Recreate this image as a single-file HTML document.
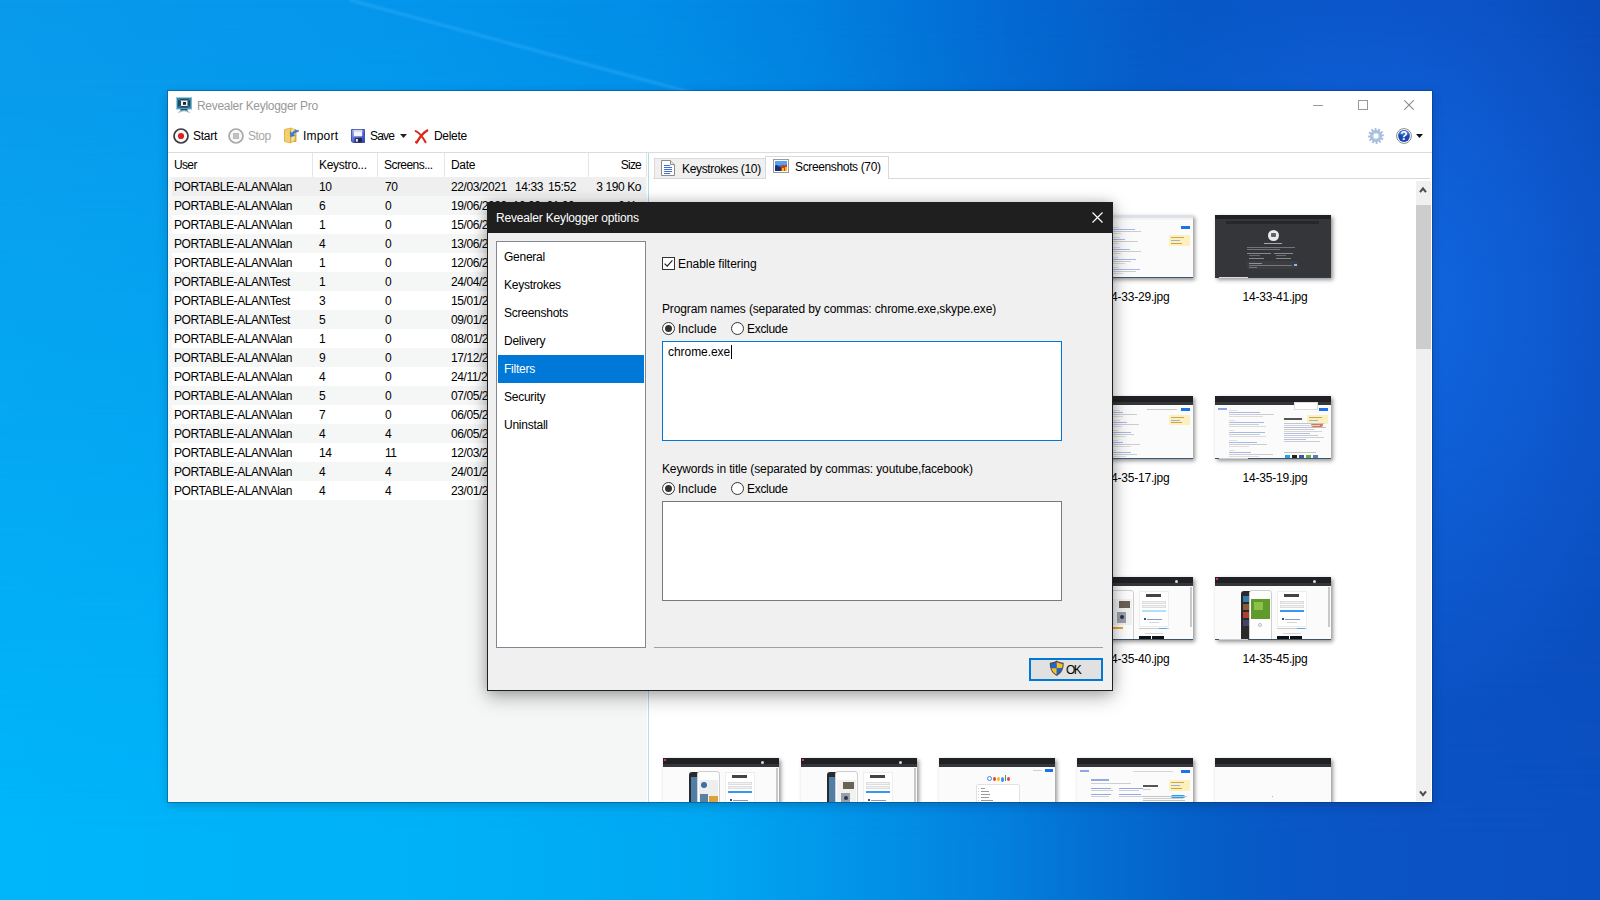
<!DOCTYPE html>
<html>
<head>
<meta charset="utf-8">
<title>Revealer Keylogger Pro</title>
<style>
*{box-sizing:border-box;margin:0;padding:0}
html,body{width:1600px;height:900px;overflow:hidden}
body{position:relative;font-family:"Liberation Sans",sans-serif;font-size:12px;color:#000;
 background:linear-gradient(to right,#0a9aeb 0%,#0496ec 25%,#028ee8 40%,#0282e1 50%,#046ad3 62.5%,#0857c6 75%,#0a4ec0 87.5%,#0a4aba 100%);
}
.abs{position:absolute}
.t{position:absolute;white-space:pre;line-height:14px;height:14px}
#wall1{left:0;top:0;width:1600px;height:900px;background:linear-gradient(to right,#00b6fa 0%,#00b2f7 25%,#00a8f2 43.75%,#028ee5 56.25%,#0380de 62.5%,#046ed2 68.75%,#055fc8 75%,#0956c6 81.25%,#0b52c4 90.6%,#0b50c2 100%);-webkit-mask-image:linear-gradient(to bottom,rgba(0,0,0,0) 0%,rgba(0,0,0,1) 93%);mask-image:linear-gradient(to bottom,rgba(0,0,0,0) 0%,rgba(0,0,0,1) 93%)}
#wall2{left:0;top:0;width:1600px;height:900px;background:radial-gradient(ellipse 300px 430px at 1400px 300px,rgba(22,118,245,.62),rgba(22,118,245,0) 100%)}
#wall3{left:0;top:0;width:1600px;height:900px}
/* main window */
#win{left:168px;top:91px;width:1264px;height:711px;overflow:hidden;background:#fff;box-shadow:0 0 0 1px rgba(0,50,100,.38),0 3px 10px rgba(0,20,50,.22)}
#listpane{left:0;top:86px;width:479px;height:625px;background:#f5f6f6}
#lhead{left:0;top:62px;width:479px;height:24px;background:#fff}
.hsep{position:absolute;top:62px;width:1px;height:24px;background:#e5e5e5}
.row{position:absolute;left:4px;width:474px;height:19px}
.row.w{background:#fff}
.row.sel{background:#efefef}
.row span{position:absolute;top:3px;line-height:14px;white-space:pre;letter-spacing:-0.42px}
.c1{left:2px}.c2{left:147px}.c3{left:213px}.c4{left:279px}.c5{right:5px}

/* right pane */
#split{left:480px;top:62px;width:1px;height:649px;background:#b5dcf3}
.tab{position:absolute;border:1px solid #d9d9d9;border-bottom:none}
.th{position:absolute;width:116px;height:63px;background:#fbfbfb;box-shadow:2px 2px 4px rgba(0,0,0,.42);overflow:hidden}
.tc{position:absolute;left:0;top:0;width:116px;height:63px;filter:blur(.5px)}
.th i{position:absolute;display:block}
.th .bar{left:0;top:0;width:116px;height:9px;background:#202124}
.th .bar2{left:0;top:6px;width:116px;height:3px;background:#35363a}
.lbl{position:absolute;width:136px;text-align:center;line-height:14px;white-space:pre;letter-spacing:-0.2px}
/* dialog */
#dlg{left:487px;top:202px;width:626px;height:489px;background:#f0f0f0;border:1px solid #1f1f1f;box-shadow:0 6px 18px rgba(0,0,0,.30),0 0 10px rgba(0,0,0,.16)}
#dtitle{left:0;top:0;width:624px;height:30px;background:#1f1f1f}

#nav{left:8px;top:38px;width:150px;height:407px;background:#fff;border:1px solid #828790}
.ni{position:absolute;left:1px;width:146px;height:28px;line-height:14px;padding:7px 0 0 6px;white-space:pre;letter-spacing:-0.25px;font-size:12px}
.ni.on{background:#0078d7;color:#fff}
.dl{position:absolute;white-space:pre;line-height:14px;height:14px}
.radio{position:absolute;width:13px;height:13px;border-radius:50%;border:1px solid #333;background:#fff}
.radio.on::after{content:"";position:absolute;left:2px;top:2px;width:7px;height:7px;border-radius:50%;background:#333}
.ta{position:absolute;left:174px;width:400px;height:100px;background:#fff}
</style>
</head>
<body>
<div id="wall1" class="abs"></div>
<div id="wall2" class="abs"></div>
<svg id="wall3" class="abs" width="1600" height="900" viewBox="0 0 1600 900">
  <defs>
    <linearGradient id="beam1" x1="0" y1="0" x2="0" y2="1"><stop offset="0" stop-color="#fff" stop-opacity=".0"/><stop offset="1" stop-color="#fff" stop-opacity=".0"/></linearGradient>
  </defs>
  <path d="M350 0 L700 95" stroke="#48b8ff" stroke-width="3" opacity=".35" style="filter:blur(1px)"/>
</svg>

<!-- ================= MAIN WINDOW ================= -->
<div id="win" class="abs">
  <!-- title bar -->
  <svg class="abs" style="left:8px;top:6px" width="16" height="16" viewBox="0 0 16 16">
    <rect x="0.5" y="0.5" width="15" height="11.5" fill="#2f86ab" stroke="#79b7d3" stroke-width="1"/>
    <path d="M.5 12 V.5 H15.5" fill="none" stroke="#9ccbe0" stroke-width="1"/>
    <rect x="2" y="2" width="12" height="8.6" fill="#1f4863"/>
    <path d="M2 2 L5 3.6 M14 2 L11.5 3.6 M2 10.6 L5 9 M14 10.6 L11.5 9" stroke="#6f9fb8" stroke-width=".7"/>
    <rect x="5" y="3.5" width="6.5" height="5.5" fill="#eef2f5"/>
    <rect x="7" y="5" width="3" height="2.8" fill="#23252b"/>
    <rect x="4.5" y="12" width="7" height="2" fill="#2b4a5e"/>
    <path d="M2.5 15.6 Q4.5 13.6 8 13.6 Q11.5 13.6 13.5 15.6" stroke="#8fb6cc" stroke-width="1.1" fill="none"/>
  </svg>
  <div class="t" style="left:29px;top:8px;color:#999;letter-spacing:-0.3px">Revealer Keylogger Pro</div>
  <!-- caption buttons -->
  <div class="abs" style="left:1145px;top:14px;width:10px;height:1px;background:#999"></div>
  <div class="abs" style="left:1190px;top:9px;width:10px;height:10px;border:1px solid #999"></div>
  <svg class="abs" style="left:1236px;top:9px" width="10" height="10" viewBox="0 0 10 10"><path d="M0.3 0.3 L9.7 9.7 M9.7 0.3 L0.3 9.7" stroke="#8c8c8c" stroke-width="1.1"/></svg>


  <!-- toolbar -->
  <svg class="abs" style="left:5px;top:37px" width="16" height="16" viewBox="0 0 16 16">
    <circle cx="8" cy="8" r="7" fill="#f7f7f7" stroke="#3c3c3c" stroke-width="1.7"/>
    <circle cx="8" cy="8" r="3.1" fill="#e02020"/>
  </svg>
  <div class="t" style="left:25px;top:38px;letter-spacing:-0.27px">Start</div>
  <svg class="abs" style="left:60px;top:37px" width="16" height="16" viewBox="0 0 16 16">
    <circle cx="8" cy="8" r="7" fill="#f8f8f8" stroke="#a9a9a9" stroke-width="1.7"/>
    <rect x="5.3" y="5.3" width="5.4" height="5.4" fill="#c2c2c2" stroke="#b0b0b0" stroke-width=".6"/>
  </svg>
  <div class="t" style="left:80px;top:38px;color:#a6a6a6;letter-spacing:-0.5px">Stop</div>
  <svg class="abs" style="left:115px;top:36px" width="17" height="17" viewBox="0 0 17 17">
    <path d="M1.5 2.5 L8 1 L8 16 L1.5 14.5 Z" fill="#f3cf6d" stroke="#d9a93a" stroke-width=".8"/>
    <path d="M8 2.5 L13 2.5 L13 14.5 L8 14.5 Z" fill="#e9bd55" stroke="#c9972a" stroke-width=".8"/>
    <path d="M8 1 L12 2.5 L12 13 L8 16 Z" fill="#f8e09a" stroke="#d9a93a" stroke-width=".6"/>
    <path d="M15.5 3.2 C12 3.2 10 4.2 8.8 6.2 L7.2 4.8 L7.6 9.8 L12 8.6 L10.4 7.4 C11.4 5.8 13 5 15.5 4.6 Z" fill="#2f7fe0" stroke="#1b5fb8" stroke-width=".4"/>
  </svg>
  <div class="t" style="left:135px;top:38px;letter-spacing:0.2px">Import</div>
  <svg class="abs" style="left:183px;top:38px" width="14" height="14" viewBox="0 0 15 15">
    <defs><linearGradient id="sv" x1="0" y1="0" x2="1" y2="1"><stop offset="0" stop-color="#a3adf0"/><stop offset=".45" stop-color="#5f6ed6"/><stop offset="1" stop-color="#2f3fb4"/></linearGradient></defs>
    <path d="M.5 .5 H14.5 V14.5 H2 L.5 13 Z" fill="url(#sv)" stroke="#3a48a8" stroke-width="1"/>
    <rect x="3" y="1" width="9" height="6.8" fill="#f4f5fc"/>
    <rect x="3" y="1" width="9" height="2.2" fill="#d4d9f3"/>
    <rect x="4" y="9.6" width="7.6" height="4.9" fill="#1f2450"/>
    <rect x="5.2" y="10.6" width="2.2" height="3" fill="#e8e8f0"/>
  </svg>
  <div class="t" style="left:202px;top:38px;letter-spacing:-0.8px">Save</div>
  <svg class="abs" style="left:232px;top:43px" width="7" height="4.4" viewBox="0 0 8 5"><path d="M0 0 H8 L4 4.6 Z" fill="#222"/></svg>
  <svg class="abs" style="left:246px;top:38px" width="15" height="15" viewBox="0 0 16 17">
    <path d="M1.4 2.4 C4.4 3.6 9.6 9.6 12.6 15" stroke="#d9291f" stroke-width="2.3" fill="none" stroke-linecap="round"/>
    <path d="M14.4 1.6 C10.4 4.2 5.2 10.4 2.6 15.2" stroke="#d9291f" stroke-width="2.7" fill="none" stroke-linecap="round"/>
    <path d="M2.6 15.2 C2.2 16 1.2 15.6 1.4 14.4" stroke="#d9291f" stroke-width="1.4" fill="none" stroke-linecap="round"/>
  </svg>
  <div class="t" style="left:266px;top:38px;letter-spacing:-0.3px">Delete</div>

  <!-- right toolbar icons -->
  <svg class="abs" style="left:1200px;top:37px" width="16" height="16" viewBox="0 0 16 16">
    <circle cx="8" cy="8" r="6.6" fill="none" stroke="#a4bedf" stroke-width="2.6" stroke-dasharray="1.8 1.6557" transform="rotate(-13 8 8)"/>
    <circle cx="8" cy="8" r="4.3" fill="none" stroke="#a9c0e0" stroke-width="2.9"/>
    <circle cx="8" cy="8" r="3.1" fill="none" stroke="#c9d3ec" stroke-width=".7"/>
    <circle cx="8" cy="8" r="5.7" fill="none" stroke="#96b2d8" stroke-width=".5"/>
  </svg>
  <svg class="abs" style="left:1228px;top:37px" width="16" height="16" viewBox="0 0 16 16">
    <circle cx="8" cy="8" r="7.4" fill="#fff" stroke="#8c8c8c" stroke-width="1"/>
    <circle cx="8" cy="8" r="5.9" fill="#1a46b2"/>
    <path d="M2.4 6.3 A5.9 5.9 0 0 1 13.6 6.3 Q8 9.2 2.4 6.3 Z" fill="#4a76d6" opacity=".7"/>
    <text x="8" y="12.4" text-anchor="middle" font-family="Liberation Sans" font-weight="bold" font-size="12" fill="#fff">?</text>
  </svg>
  <svg class="abs" style="left:1248px;top:43px" width="7" height="4.4" viewBox="0 0 8 5"><path d="M0 0 H8 L4 4.6 Z" fill="#111"/></svg>

  <!-- toolbar line -->
  <div class="abs" style="left:0;top:61px;width:1264px;height:1px;background:#dcdcdc"></div>

  <!-- list -->
  <div id="listpane" class="abs"></div>
  <div id="lhead" class="abs"></div>

  <div class="hsep" style="left:144px"></div>
  <div class="hsep" style="left:209px"></div>
  <div class="hsep" style="left:276px"></div>
  <div class="hsep" style="left:420px"></div>
  <div class="hsep" style="left:478px"></div>
  <div class="t" style="left:6px;top:67px;letter-spacing:-0.65px">User</div>
  <div class="t" style="left:151px;top:67px;letter-spacing:-0.3px">Keystro...</div>
  <div class="t" style="left:216px;top:67px;letter-spacing:-0.55px">Screens...</div>
  <div class="t" style="left:283px;top:67px;letter-spacing:-0.3px">Date</div>
  <div class="t" style="right:791px;top:67px;letter-spacing:-0.8px">Size</div>
  <div class="row sel" style="top:86px"><span class="c1">PORTABLE-ALAN\Alan</span><span class="c2">10</span><span class="c3">70</span><span class="c4">22/03/2021</span><span style="left:343px">14:33</span><span style="left:376px">15:52</span><span class="c5">3 190 Ko</span></div>
  <div class="row" style="top:105px"><span class="c1">PORTABLE-ALAN\Alan</span><span class="c2">6</span><span class="c3">0</span><span class="c4">19/06/2020  10:02  21:00</span><span class="c5">6 Ko</span></div>
  <div class="row w" style="top:124px"><span class="c1">PORTABLE-ALAN\Alan</span><span class="c2">1</span><span class="c3">0</span><span class="c4">15/06/2020  09:12  09:40</span><span class="c5">1 Ko</span></div>
  <div class="row" style="top:143px"><span class="c1">PORTABLE-ALAN\Alan</span><span class="c2">4</span><span class="c3">0</span><span class="c4">13/06/2020  11:25  18:04</span><span class="c5">3 Ko</span></div>
  <div class="row w" style="top:162px"><span class="c1">PORTABLE-ALAN\Alan</span><span class="c2">1</span><span class="c3">0</span><span class="c4">12/06/2020  16:41  16:58</span><span class="c5">1 Ko</span></div>
  <div class="row" style="top:181px"><span class="c1">PORTABLE-ALAN\Test</span><span class="c2">1</span><span class="c3">0</span><span class="c4">24/04/2020  10:11  10:30</span><span class="c5">1 Ko</span></div>
  <div class="row w" style="top:200px"><span class="c1">PORTABLE-ALAN\Test</span><span class="c2">3</span><span class="c3">0</span><span class="c4">15/01/2020  14:02  15:20</span><span class="c5">2 Ko</span></div>
  <div class="row" style="top:219px"><span class="c1">PORTABLE-ALAN\Test</span><span class="c2">5</span><span class="c3">0</span><span class="c4">09/01/2020  09:45  12:13</span><span class="c5">4 Ko</span></div>
  <div class="row w" style="top:238px"><span class="c1">PORTABLE-ALAN\Alan</span><span class="c2">1</span><span class="c3">0</span><span class="c4">08/01/2020  17:30  17:42</span><span class="c5">1 Ko</span></div>
  <div class="row" style="top:257px"><span class="c1">PORTABLE-ALAN\Alan</span><span class="c2">9</span><span class="c3">0</span><span class="c4">17/12/2019  08:55  19:21</span><span class="c5">8 Ko</span></div>
  <div class="row w" style="top:276px"><span class="c1">PORTABLE-ALAN\Alan</span><span class="c2">4</span><span class="c3">0</span><span class="c4">24/11/2019  13:10  15:47</span><span class="c5">3 Ko</span></div>
  <div class="row" style="top:295px"><span class="c1">PORTABLE-ALAN\Alan</span><span class="c2">5</span><span class="c3">0</span><span class="c4">07/05/2019  10:20  16:05</span><span class="c5">4 Ko</span></div>
  <div class="row w" style="top:314px"><span class="c1">PORTABLE-ALAN\Alan</span><span class="c2">7</span><span class="c3">0</span><span class="c4">06/05/2019  15:32  22:10</span><span class="c5">5 Ko</span></div>
  <div class="row" style="top:333px"><span class="c1">PORTABLE-ALAN\Alan</span><span class="c2">4</span><span class="c3">4</span><span class="c4">06/05/2019  09:01  11:48</span><span class="c5">212 Ko</span></div>
  <div class="row w" style="top:352px"><span class="c1">PORTABLE-ALAN\Alan</span><span class="c2">14</span><span class="c3">11</span><span class="c4">12/03/2019  08:40  18:33</span><span class="c5">640 Ko</span></div>
  <div class="row" style="top:371px"><span class="c1">PORTABLE-ALAN\Alan</span><span class="c2">4</span><span class="c3">4</span><span class="c4">24/01/2019  14:14  15:02</span><span class="c5">198 Ko</span></div>
  <div class="row w" style="top:390px"><span class="c1">PORTABLE-ALAN\Alan</span><span class="c2">4</span><span class="c3">4</span><span class="c4">23/01/2019  11:07  12:30</span><span class="c5">205 Ko</span></div>

  <!-- splitter + right pane -->
  <div id="split" class="abs"></div>
  <div class="abs" style="left:485px;top:87px;width:777px;height:1px;background:#d9d9d9"></div>
  <div class="tab" style="left:486px;top:67px;width:112px;height:20px;background:#f0f0f0"></div>
  <svg class="abs" style="left:493px;top:69px" width="14" height="16" viewBox="0 0 14 16">
    <path d="M.5 .5 H9.5 L13.5 4.5 V15.5 H.5 Z" fill="#fff" stroke="#8c8c8c" stroke-width="1"/>
    <path d="M9.5 .5 V4.5 H13.5" fill="#e6e6e6" stroke="#8c8c8c" stroke-width="1"/>
    <path d="M3 5.5 H9 M3 7.5 H11 M3 9.5 H11 M3 11.5 H11 M3 13.5 H9" stroke="#3d6fd6" stroke-width="1"/>
  </svg>
  <div class="t" style="left:514px;top:71px;letter-spacing:-0.35px">Keystrokes (10)</div>
  <div class="tab" style="left:597px;top:65px;width:124px;height:23px;background:#fff"></div>
  <svg class="abs" style="left:605px;top:68px" width="16" height="14" viewBox="0 0 16 14">
    <rect x=".5" y=".5" width="15" height="13" fill="#fff" stroke="#9a9a9a"/>
    <rect x="2" y="2" width="12" height="10" fill="#3f7fd8"/>
    <rect x="2" y="2" width="12" height="4" fill="#5aa0ea"/>
    <path d="M2 12 V7 L4 6 L6 8 L7 7 L8 9 V12 Z" fill="#1c2f6a"/>
    <path d="M8 12 V8 L10 5.5 L12 7 L14 5 V12 Z" fill="#d23a1e"/>
    <rect x="12" y="8" width="2" height="4" fill="#f2c21a"/>
    <rect x="9" y="9" width="2" height="3" fill="#f2c21a"/>
  </svg>
  <div class="t" style="left:627px;top:69px;letter-spacing:-0.36px">Screenshots (70)</div>
  <div class="th" style="left:495px;top:124px"><div class="tc"><i style="left:0;top:0;width:116px;height:3px;background:#dee1e6"></i><i style="left:0;top:3px;width:116px;height:2px;background:#f1f3f4"></i><i style="left:104px;top:11px;width:9px;height:3px;background:#1a73e8"></i><i style="left:92px;top:20px;width:21px;height:11px;background:#fdf0bf"></i><i style="left:94px;top:22px;width:13px;height:1px;background:#caa85a"></i><i style="left:94px;top:25px;width:9px;height:1px;background:#9fb0d6"></i><i style="left:94px;top:28px;width:11px;height:1px;background:#d1a33a"></i><i style="left:34px;top:12px;width:8px;height:1px;background:#dedede"></i><i style="left:34px;top:14px;width:24px;height:1px;background:#a6b9ee"></i><i style="left:34px;top:16px;width:30px;height:1px;background:#cdcdcd"></i><i style="left:34px;top:18px;width:10px;height:1px;background:#dcdcdc"></i><i style="left:34px;top:22px;width:9px;height:1px;background:#dedede"></i><i style="left:34px;top:24px;width:14px;height:1px;background:#a6b9ee"></i><i style="left:34px;top:26px;width:27px;height:1px;background:#cdcdcd"></i><i style="left:34px;top:28px;width:8px;height:1px;background:#dcdcdc"></i><i style="left:34px;top:32px;width:9px;height:1px;background:#dedede"></i><i style="left:34px;top:34px;width:19px;height:1px;background:#a6b9ee"></i><i style="left:34px;top:36px;width:30px;height:1px;background:#cdcdcd"></i><i style="left:34px;top:38px;width:10px;height:1px;background:#dcdcdc"></i><i style="left:34px;top:42px;width:7px;height:1px;background:#dedede"></i><i style="left:34px;top:44px;width:25px;height:1px;background:#a6b9ee"></i><i style="left:34px;top:46px;width:20px;height:1px;background:#cdcdcd"></i><i style="left:34px;top:48px;width:14px;height:1px;background:#dcdcdc"></i><i style="left:34px;top:52px;width:8px;height:1px;background:#dedede"></i><i style="left:34px;top:54px;width:29px;height:1px;background:#a6b9ee"></i><i style="left:34px;top:56px;width:25px;height:1px;background:#cdcdcd"></i><i style="left:34px;top:58px;width:12px;height:1px;background:#dcdcdc"></i><i style="left:0;top:62px;width:116px;height:1px;background:#3c5a78"></i></div></div><div class="lbl" style="left:487px;top:199px">14-33-08.jpg</div>
  <div class="th" style="left:633px;top:124px"><div class="tc"><i style="left:0;top:0;width:116px;height:3px;background:#dee1e6"></i><i style="left:0;top:3px;width:116px;height:2px;background:#f1f3f4"></i><i style="left:104px;top:11px;width:9px;height:3px;background:#1a73e8"></i><i style="left:92px;top:20px;width:21px;height:11px;background:#fdf0bf"></i><i style="left:94px;top:22px;width:13px;height:1px;background:#caa85a"></i><i style="left:94px;top:25px;width:9px;height:1px;background:#9fb0d6"></i><i style="left:94px;top:28px;width:11px;height:1px;background:#d1a33a"></i><i style="left:34px;top:12px;width:8px;height:1px;background:#dedede"></i><i style="left:34px;top:14px;width:24px;height:1px;background:#a6b9ee"></i><i style="left:34px;top:16px;width:30px;height:1px;background:#cdcdcd"></i><i style="left:34px;top:18px;width:10px;height:1px;background:#dcdcdc"></i><i style="left:34px;top:22px;width:9px;height:1px;background:#dedede"></i><i style="left:34px;top:24px;width:14px;height:1px;background:#a6b9ee"></i><i style="left:34px;top:26px;width:27px;height:1px;background:#cdcdcd"></i><i style="left:34px;top:28px;width:8px;height:1px;background:#dcdcdc"></i><i style="left:34px;top:32px;width:9px;height:1px;background:#dedede"></i><i style="left:34px;top:34px;width:19px;height:1px;background:#a6b9ee"></i><i style="left:34px;top:36px;width:30px;height:1px;background:#cdcdcd"></i><i style="left:34px;top:38px;width:10px;height:1px;background:#dcdcdc"></i><i style="left:34px;top:42px;width:7px;height:1px;background:#dedede"></i><i style="left:34px;top:44px;width:25px;height:1px;background:#a6b9ee"></i><i style="left:34px;top:46px;width:20px;height:1px;background:#cdcdcd"></i><i style="left:34px;top:48px;width:14px;height:1px;background:#dcdcdc"></i><i style="left:34px;top:52px;width:8px;height:1px;background:#dedede"></i><i style="left:34px;top:54px;width:29px;height:1px;background:#a6b9ee"></i><i style="left:34px;top:56px;width:25px;height:1px;background:#cdcdcd"></i><i style="left:34px;top:58px;width:12px;height:1px;background:#dcdcdc"></i><i style="left:0;top:62px;width:116px;height:1px;background:#3c5a78"></i></div></div><div class="lbl" style="left:625px;top:199px">14-33-15.jpg</div>
  <div class="th" style="left:771px;top:124px"><div class="tc"><i style="left:0;top:0;width:116px;height:3px;background:#dee1e6"></i><i style="left:0;top:3px;width:116px;height:2px;background:#f1f3f4"></i><i style="left:104px;top:11px;width:9px;height:3px;background:#1a73e8"></i><i style="left:92px;top:20px;width:21px;height:11px;background:#fdf0bf"></i><i style="left:94px;top:22px;width:13px;height:1px;background:#caa85a"></i><i style="left:94px;top:25px;width:9px;height:1px;background:#9fb0d6"></i><i style="left:94px;top:28px;width:11px;height:1px;background:#d1a33a"></i><i style="left:34px;top:12px;width:8px;height:1px;background:#dedede"></i><i style="left:34px;top:14px;width:24px;height:1px;background:#a6b9ee"></i><i style="left:34px;top:16px;width:30px;height:1px;background:#cdcdcd"></i><i style="left:34px;top:18px;width:10px;height:1px;background:#dcdcdc"></i><i style="left:34px;top:22px;width:9px;height:1px;background:#dedede"></i><i style="left:34px;top:24px;width:14px;height:1px;background:#a6b9ee"></i><i style="left:34px;top:26px;width:27px;height:1px;background:#cdcdcd"></i><i style="left:34px;top:28px;width:8px;height:1px;background:#dcdcdc"></i><i style="left:34px;top:32px;width:9px;height:1px;background:#dedede"></i><i style="left:34px;top:34px;width:19px;height:1px;background:#a6b9ee"></i><i style="left:34px;top:36px;width:30px;height:1px;background:#cdcdcd"></i><i style="left:34px;top:38px;width:10px;height:1px;background:#dcdcdc"></i><i style="left:34px;top:42px;width:7px;height:1px;background:#dedede"></i><i style="left:34px;top:44px;width:25px;height:1px;background:#a6b9ee"></i><i style="left:34px;top:46px;width:20px;height:1px;background:#cdcdcd"></i><i style="left:34px;top:48px;width:14px;height:1px;background:#dcdcdc"></i><i style="left:34px;top:52px;width:8px;height:1px;background:#dedede"></i><i style="left:34px;top:54px;width:29px;height:1px;background:#a6b9ee"></i><i style="left:34px;top:56px;width:25px;height:1px;background:#cdcdcd"></i><i style="left:34px;top:58px;width:12px;height:1px;background:#dcdcdc"></i><i style="left:0;top:62px;width:116px;height:1px;background:#3c5a78"></i></div></div><div class="lbl" style="left:763px;top:199px">14-33-22.jpg</div>
  <div class="th" style="left:909px;top:124px"><div class="tc"><i style="left:0;top:0;width:116px;height:3px;background:#dee1e6"></i><i style="left:0;top:3px;width:116px;height:2px;background:#f1f3f4"></i><i style="left:104px;top:11px;width:9px;height:3px;background:#1a73e8"></i><i style="left:92px;top:20px;width:21px;height:11px;background:#fdf0bf"></i><i style="left:94px;top:22px;width:13px;height:1px;background:#caa85a"></i><i style="left:94px;top:25px;width:9px;height:1px;background:#9fb0d6"></i><i style="left:94px;top:28px;width:11px;height:1px;background:#d1a33a"></i><i style="left:34px;top:12px;width:8px;height:1px;background:#dedede"></i><i style="left:34px;top:14px;width:24px;height:1px;background:#a6b9ee"></i><i style="left:34px;top:16px;width:30px;height:1px;background:#cdcdcd"></i><i style="left:34px;top:18px;width:10px;height:1px;background:#dcdcdc"></i><i style="left:34px;top:22px;width:9px;height:1px;background:#dedede"></i><i style="left:34px;top:24px;width:14px;height:1px;background:#a6b9ee"></i><i style="left:34px;top:26px;width:27px;height:1px;background:#cdcdcd"></i><i style="left:34px;top:28px;width:8px;height:1px;background:#dcdcdc"></i><i style="left:34px;top:32px;width:9px;height:1px;background:#dedede"></i><i style="left:34px;top:34px;width:19px;height:1px;background:#a6b9ee"></i><i style="left:34px;top:36px;width:30px;height:1px;background:#cdcdcd"></i><i style="left:34px;top:38px;width:10px;height:1px;background:#dcdcdc"></i><i style="left:34px;top:42px;width:7px;height:1px;background:#dedede"></i><i style="left:34px;top:44px;width:25px;height:1px;background:#a6b9ee"></i><i style="left:34px;top:46px;width:20px;height:1px;background:#cdcdcd"></i><i style="left:34px;top:48px;width:14px;height:1px;background:#dcdcdc"></i><i style="left:34px;top:52px;width:8px;height:1px;background:#dedede"></i><i style="left:34px;top:54px;width:29px;height:1px;background:#a6b9ee"></i><i style="left:34px;top:56px;width:25px;height:1px;background:#cdcdcd"></i><i style="left:34px;top:58px;width:12px;height:1px;background:#dcdcdc"></i><i style="left:0;top:62px;width:116px;height:1px;background:#3c5a78"></i></div></div><div class="lbl" style="left:901px;top:199px">14-33-29.jpg</div>
  <div class="th" style="left:1047px;top:124px"><div class="tc"><i style="left:0;top:0;width:116px;height:63px;background:#35363a"></i><i style="left:0;top:0;width:116px;height:4px;background:#202124"></i><i style="left:11px;top:6px;width:93px;height:3px;background:#26272b"></i><i style="left:52.5px;top:14.5px;width:11px;height:11px;border-radius:50%;background:#e8eaed"></i><i style="left:55.5px;top:18px;width:5px;height:4px;border-radius:1px;background:#5f6368"></i><i style="left:49px;top:28px;width:18px;height:1px;background:#a2a5a9"></i><i style="left:32px;top:32px;width:48px;height:1px;background:#70747a"></i><i style="left:32px;top:34px;width:33px;height:1px;background:#70747a"></i><i style="left:32px;top:38px;width:24px;height:1px;background:#84888d"></i><i style="left:59px;top:38px;width:19px;height:1px;background:#84888d"></i><i style="left:34px;top:40px;width:11px;height:1px;background:#676a6f"></i><i style="left:34px;top:43px;width:15px;height:1px;background:#84888d"></i><i style="left:61px;top:40px;width:10px;height:1px;background:#676a6f"></i><i style="left:61px;top:43px;width:15px;height:1px;background:#84888d"></i><i style="left:32px;top:46px;width:51px;height:8px;background:#3c3d41"></i><i style="left:34px;top:48px;width:13px;height:1px;background:#8e9196"></i><i style="left:34px;top:50px;width:43px;height:1px;background:#74777c"></i><i style="left:34px;top:52px;width:8px;height:1px;background:#74777c"></i><i style="left:79px;top:49px;width:3px;height:2px;background:#8ab4f8"></i><i style="left:4px;top:62px;width:29px;height:1px;background:#dcdcdc"></i><i style="left:33px;top:62px;width:83px;height:1px;background:#2b3f55"></i></div></div><div class="lbl" style="left:1039px;top:199px">14-33-41.jpg</div>
  <div class="th" style="left:495px;top:305px"><div class="tc"><i class="bar"></i><i class="bar2"></i><i style="left:104px;top:12px;width:9px;height:3px;background:#1a73e8"></i><i style="left:70px;top:13px;width:30px;height:1px;background:#c8c8c8"></i><i style="left:92px;top:19px;width:21px;height:10px;background:#fdf0bf"></i><i style="left:94px;top:21px;width:13px;height:1px;background:#caa85a"></i><i style="left:94px;top:24px;width:9px;height:1px;background:#9fb0d6"></i><i style="left:94px;top:26px;width:11px;height:1px;background:#d1a33a"></i><i style="left:34px;top:14px;width:9px;height:1px;background:#dedede"></i><i style="left:34px;top:16px;width:12px;height:1px;background:#a6b9ee"></i><i style="left:34px;top:18px;width:26px;height:1px;background:#cdcdcd"></i><i style="left:34px;top:20px;width:12px;height:1px;background:#dcdcdc"></i><i style="left:34px;top:24px;width:9px;height:1px;background:#dedede"></i><i style="left:34px;top:26px;width:16px;height:1px;background:#a6b9ee"></i><i style="left:34px;top:28px;width:28px;height:1px;background:#cdcdcd"></i><i style="left:34px;top:30px;width:11px;height:1px;background:#dcdcdc"></i><i style="left:34px;top:34px;width:7px;height:1px;background:#dedede"></i><i style="left:34px;top:36px;width:20px;height:1px;background:#a6b9ee"></i><i style="left:34px;top:38px;width:23px;height:1px;background:#cdcdcd"></i><i style="left:34px;top:40px;width:15px;height:1px;background:#dcdcdc"></i><i style="left:34px;top:44px;width:7px;height:1px;background:#dedede"></i><i style="left:34px;top:46px;width:12px;height:1px;background:#a6b9ee"></i><i style="left:34px;top:48px;width:29px;height:1px;background:#cdcdcd"></i><i style="left:34px;top:50px;width:20px;height:1px;background:#dcdcdc"></i><i style="left:34px;top:54px;width:5px;height:1px;background:#dedede"></i><i style="left:34px;top:56px;width:20px;height:1px;background:#a6b9ee"></i><i style="left:34px;top:58px;width:26px;height:1px;background:#cdcdcd"></i><i style="left:34px;top:60px;width:15px;height:1px;background:#dcdcdc"></i><i style="left:0;top:62px;width:116px;height:1px;background:#3c5a78"></i></div></div><div class="lbl" style="left:487px;top:380px">14-34-02.jpg</div>
  <div class="th" style="left:633px;top:305px"><div class="tc"><i class="bar"></i><i class="bar2"></i><i style="left:104px;top:12px;width:9px;height:3px;background:#1a73e8"></i><i style="left:70px;top:13px;width:30px;height:1px;background:#c8c8c8"></i><i style="left:92px;top:19px;width:21px;height:10px;background:#fdf0bf"></i><i style="left:94px;top:21px;width:13px;height:1px;background:#caa85a"></i><i style="left:94px;top:24px;width:9px;height:1px;background:#9fb0d6"></i><i style="left:94px;top:26px;width:11px;height:1px;background:#d1a33a"></i><i style="left:34px;top:14px;width:9px;height:1px;background:#dedede"></i><i style="left:34px;top:16px;width:12px;height:1px;background:#a6b9ee"></i><i style="left:34px;top:18px;width:26px;height:1px;background:#cdcdcd"></i><i style="left:34px;top:20px;width:12px;height:1px;background:#dcdcdc"></i><i style="left:34px;top:24px;width:9px;height:1px;background:#dedede"></i><i style="left:34px;top:26px;width:16px;height:1px;background:#a6b9ee"></i><i style="left:34px;top:28px;width:28px;height:1px;background:#cdcdcd"></i><i style="left:34px;top:30px;width:11px;height:1px;background:#dcdcdc"></i><i style="left:34px;top:34px;width:7px;height:1px;background:#dedede"></i><i style="left:34px;top:36px;width:20px;height:1px;background:#a6b9ee"></i><i style="left:34px;top:38px;width:23px;height:1px;background:#cdcdcd"></i><i style="left:34px;top:40px;width:15px;height:1px;background:#dcdcdc"></i><i style="left:34px;top:44px;width:7px;height:1px;background:#dedede"></i><i style="left:34px;top:46px;width:12px;height:1px;background:#a6b9ee"></i><i style="left:34px;top:48px;width:29px;height:1px;background:#cdcdcd"></i><i style="left:34px;top:50px;width:20px;height:1px;background:#dcdcdc"></i><i style="left:34px;top:54px;width:5px;height:1px;background:#dedede"></i><i style="left:34px;top:56px;width:20px;height:1px;background:#a6b9ee"></i><i style="left:34px;top:58px;width:26px;height:1px;background:#cdcdcd"></i><i style="left:34px;top:60px;width:15px;height:1px;background:#dcdcdc"></i><i style="left:0;top:62px;width:116px;height:1px;background:#3c5a78"></i></div></div><div class="lbl" style="left:625px;top:380px">14-34-30.jpg</div>
  <div class="th" style="left:771px;top:305px"><div class="tc"><i class="bar"></i><i class="bar2"></i><i style="left:104px;top:12px;width:9px;height:3px;background:#1a73e8"></i><i style="left:70px;top:13px;width:30px;height:1px;background:#c8c8c8"></i><i style="left:92px;top:19px;width:21px;height:10px;background:#fdf0bf"></i><i style="left:94px;top:21px;width:13px;height:1px;background:#caa85a"></i><i style="left:94px;top:24px;width:9px;height:1px;background:#9fb0d6"></i><i style="left:94px;top:26px;width:11px;height:1px;background:#d1a33a"></i><i style="left:34px;top:14px;width:9px;height:1px;background:#dedede"></i><i style="left:34px;top:16px;width:12px;height:1px;background:#a6b9ee"></i><i style="left:34px;top:18px;width:26px;height:1px;background:#cdcdcd"></i><i style="left:34px;top:20px;width:12px;height:1px;background:#dcdcdc"></i><i style="left:34px;top:24px;width:9px;height:1px;background:#dedede"></i><i style="left:34px;top:26px;width:16px;height:1px;background:#a6b9ee"></i><i style="left:34px;top:28px;width:28px;height:1px;background:#cdcdcd"></i><i style="left:34px;top:30px;width:11px;height:1px;background:#dcdcdc"></i><i style="left:34px;top:34px;width:7px;height:1px;background:#dedede"></i><i style="left:34px;top:36px;width:20px;height:1px;background:#a6b9ee"></i><i style="left:34px;top:38px;width:23px;height:1px;background:#cdcdcd"></i><i style="left:34px;top:40px;width:15px;height:1px;background:#dcdcdc"></i><i style="left:34px;top:44px;width:7px;height:1px;background:#dedede"></i><i style="left:34px;top:46px;width:12px;height:1px;background:#a6b9ee"></i><i style="left:34px;top:48px;width:29px;height:1px;background:#cdcdcd"></i><i style="left:34px;top:50px;width:20px;height:1px;background:#dcdcdc"></i><i style="left:34px;top:54px;width:5px;height:1px;background:#dedede"></i><i style="left:34px;top:56px;width:20px;height:1px;background:#a6b9ee"></i><i style="left:34px;top:58px;width:26px;height:1px;background:#cdcdcd"></i><i style="left:34px;top:60px;width:15px;height:1px;background:#dcdcdc"></i><i style="left:0;top:62px;width:116px;height:1px;background:#3c5a78"></i></div></div><div class="lbl" style="left:763px;top:380px">14-35-04.jpg</div>
  <div class="th" style="left:909px;top:305px"><div class="tc"><i class="bar"></i><i class="bar2"></i><i style="left:104px;top:12px;width:9px;height:3px;background:#1a73e8"></i><i style="left:70px;top:13px;width:30px;height:1px;background:#c8c8c8"></i><i style="left:92px;top:19px;width:21px;height:10px;background:#fdf0bf"></i><i style="left:94px;top:21px;width:13px;height:1px;background:#caa85a"></i><i style="left:94px;top:24px;width:9px;height:1px;background:#9fb0d6"></i><i style="left:94px;top:26px;width:11px;height:1px;background:#d1a33a"></i><i style="left:34px;top:14px;width:9px;height:1px;background:#dedede"></i><i style="left:34px;top:16px;width:12px;height:1px;background:#a6b9ee"></i><i style="left:34px;top:18px;width:26px;height:1px;background:#cdcdcd"></i><i style="left:34px;top:20px;width:12px;height:1px;background:#dcdcdc"></i><i style="left:34px;top:24px;width:9px;height:1px;background:#dedede"></i><i style="left:34px;top:26px;width:16px;height:1px;background:#a6b9ee"></i><i style="left:34px;top:28px;width:28px;height:1px;background:#cdcdcd"></i><i style="left:34px;top:30px;width:11px;height:1px;background:#dcdcdc"></i><i style="left:34px;top:34px;width:7px;height:1px;background:#dedede"></i><i style="left:34px;top:36px;width:20px;height:1px;background:#a6b9ee"></i><i style="left:34px;top:38px;width:23px;height:1px;background:#cdcdcd"></i><i style="left:34px;top:40px;width:15px;height:1px;background:#dcdcdc"></i><i style="left:34px;top:44px;width:7px;height:1px;background:#dedede"></i><i style="left:34px;top:46px;width:12px;height:1px;background:#a6b9ee"></i><i style="left:34px;top:48px;width:29px;height:1px;background:#cdcdcd"></i><i style="left:34px;top:50px;width:20px;height:1px;background:#dcdcdc"></i><i style="left:34px;top:54px;width:5px;height:1px;background:#dedede"></i><i style="left:34px;top:56px;width:20px;height:1px;background:#a6b9ee"></i><i style="left:34px;top:58px;width:26px;height:1px;background:#cdcdcd"></i><i style="left:34px;top:60px;width:15px;height:1px;background:#dcdcdc"></i><i style="left:0;top:62px;width:116px;height:1px;background:#3c5a78"></i></div></div><div class="lbl" style="left:901px;top:380px">14-35-17.jpg</div>
  <div class="th" style="left:1047px;top:305px"><div class="tc"><i class="bar"></i><i class="bar2"></i><i style="left:79px;top:6px;width:24px;height:8px;background:#fff;border:1px solid #ddd"></i><i style="left:3px;top:12px;width:9px;height:2px;background:#8aa7e8"></i><i style="left:104px;top:12px;width:9px;height:3px;background:#1a73e8"></i><i style="left:92px;top:19px;width:21px;height:9px;background:#fdf0bf"></i><i style="left:94px;top:21px;width:13px;height:1px;background:#caa85a"></i><i style="left:94px;top:24px;width:9px;height:1px;background:#9fb0d6"></i><i style="left:96px;top:27px;width:12px;height:4px;border-radius:2px;background:#e8743a"></i><i style="left:69px;top:22px;width:18px;height:2px;background:#555"></i><i style="left:69px;top:27px;width:40px;height:1px;background:#c6c6c6"></i><i style="left:69px;top:29px;width:36px;height:1px;background:#d2d2d2"></i><i style="left:69px;top:31px;width:42px;height:1px;background:#aebff0"></i><i style="left:69px;top:33px;width:30px;height:1px;background:#cacaca"></i><i style="left:69px;top:35px;width:38px;height:1px;background:#d5d5d5"></i><i style="left:69px;top:37px;width:26px;height:1px;background:#aebff0"></i><i style="left:69px;top:39px;width:34px;height:1px;background:#cacaca"></i><i style="left:69px;top:41px;width:40px;height:1px;background:#d2d2d2"></i><i style="left:69px;top:43px;width:22px;height:1px;background:#aebff0"></i><i style="left:69px;top:45px;width:36px;height:1px;background:#cccccc"></i><i style="left:69px;top:56px;width:32px;height:1px;background:#c4c4c4"></i><i style="left:70px;top:59px;width:5px;height:5px;background:#1da1f2"></i><i style="left:77px;top:59px;width:5px;height:5px;background:#222"></i><i style="left:84px;top:59px;width:5px;height:5px;background:#3b5998"></i><i style="left:91px;top:59px;width:5px;height:5px;background:#6aa84f"></i><i style="left:98px;top:59px;width:5px;height:5px;background:#5b7fb5"></i><i style="left:14px;top:14px;width:8px;height:1px;background:#dedede"></i><i style="left:14px;top:16px;width:31px;height:1px;background:#a6b9ee"></i><i style="left:14px;top:18px;width:45px;height:1px;background:#cdcdcd"></i><i style="left:14px;top:20px;width:34px;height:1px;background:#dcdcdc"></i><i style="left:14px;top:24px;width:6px;height:1px;background:#dedede"></i><i style="left:14px;top:26px;width:35px;height:1px;background:#a6b9ee"></i><i style="left:14px;top:28px;width:30px;height:1px;background:#cdcdcd"></i><i style="left:14px;top:30px;width:37px;height:1px;background:#dcdcdc"></i><i style="left:14px;top:34px;width:5px;height:1px;background:#dedede"></i><i style="left:14px;top:36px;width:36px;height:1px;background:#a6b9ee"></i><i style="left:14px;top:38px;width:31px;height:1px;background:#cdcdcd"></i><i style="left:14px;top:40px;width:37px;height:1px;background:#dcdcdc"></i><i style="left:14px;top:44px;width:8px;height:1px;background:#dedede"></i><i style="left:14px;top:46px;width:28px;height:1px;background:#a6b9ee"></i><i style="left:14px;top:48px;width:38px;height:1px;background:#cdcdcd"></i><i style="left:14px;top:50px;width:20px;height:1px;background:#dcdcdc"></i><i style="left:14px;top:54px;width:6px;height:1px;background:#dedede"></i><i style="left:14px;top:56px;width:22px;height:1px;background:#a6b9ee"></i><i style="left:14px;top:58px;width:44px;height:1px;background:#cdcdcd"></i><i style="left:14px;top:60px;width:30px;height:1px;background:#dcdcdc"></i><i style="left:0;top:62px;width:116px;height:1px;background:#3a566f"></i><i style="left:4px;top:62px;width:29px;height:1px;background:#c9d0d6"></i></div></div><div class="lbl" style="left:1039px;top:380px">14-35-19.jpg</div>
  <div class="th" style="left:495px;top:486px"><div class="tc"><i class="bar"></i><i class="bar2"></i><i style="left:1px;top:1px;width:2px;height:2px;background:#e1306c"></i><i style="left:98px;top:3px;width:3px;height:3px;border-radius:50%;background:#ddd"></i><i style="left:26px;top:14px;width:18px;height:49px;border-radius:3px 3px 0 0;background:#2a2a2c"></i><i style="left:34px;top:13px;width:23px;height:50px;border-radius:3px 3px 0 0;background:#fdfdfd;border:1px solid #cfcfcf"></i><i style="left:28px;top:19px;width:6px;height:30px;background:#4f7ea8"></i><i style="left:36px;top:22px;width:19px;height:26px;background:#eee"></i><i style="left:38px;top:24px;width:6px;height:6px;border-radius:50%;background:#3a6ea5"></i><i style="left:37px;top:36px;width:8px;height:10px;background:#5a7fa0"></i><i style="left:46px;top:38px;width:9px;height:10px;background:#d9a23a"></i><i style="left:62px;top:14px;width:30px;height:36px;background:#fff;border:1px solid #eee"></i><i style="left:69px;top:17px;width:15px;height:3px;background:#444"></i><i style="left:65px;top:24px;width:24px;height:3px;background:#f3f3f3;border:1px solid #ddd"></i><i style="left:65px;top:28px;width:24px;height:3px;background:#f3f3f3;border:1px solid #ddd"></i><i style="left:65px;top:33px;width:24px;height:2px;background:#3897f0"></i><i style="left:67px;top:41px;width:2px;height:2px;background:#385185"></i><i style="left:70px;top:42px;width:15px;height:1px;background:#8a9bc0"></i><i style="left:72px;top:45px;width:10px;height:1px;background:#d6d6d6"></i><i style="left:62px;top:51px;width:30px;height:1px;background:#ccc"></i><i style="left:82px;top:51px;width:8px;height:1px;background:#5aa9f0"></i><i style="left:68px;top:56px;width:18px;height:1px;background:#d6d6d6"></i><i style="left:62px;top:59px;width:12px;height:4px;background:#111"></i><i style="left:75px;top:59px;width:12px;height:4px;background:#111"></i><i style="left:113px;top:10px;width:2px;height:40px;background:#c9c9c9"></i><i style="left:0;top:62px;width:116px;height:1px;background:#3a566f"></i><i style="left:4px;top:62px;width:29px;height:1px;background:#c9d0d6"></i></div></div><div class="lbl" style="left:487px;top:561px">14-35-24.jpg</div>
  <div class="th" style="left:633px;top:486px"><div class="tc"><i class="bar"></i><i class="bar2"></i><i style="left:1px;top:1px;width:2px;height:2px;background:#e1306c"></i><i style="left:98px;top:3px;width:3px;height:3px;border-radius:50%;background:#ddd"></i><i style="left:26px;top:14px;width:18px;height:49px;border-radius:3px 3px 0 0;background:#2a2a2c"></i><i style="left:34px;top:13px;width:23px;height:50px;border-radius:3px 3px 0 0;background:#fdfdfd;border:1px solid #cfcfcf"></i><i style="left:28px;top:19px;width:6px;height:30px;background:#4f7ea8"></i><i style="left:36px;top:22px;width:19px;height:26px;background:#eee"></i><i style="left:38px;top:24px;width:6px;height:6px;border-radius:50%;background:#3a6ea5"></i><i style="left:37px;top:36px;width:8px;height:10px;background:#5a7fa0"></i><i style="left:46px;top:38px;width:9px;height:10px;background:#d9a23a"></i><i style="left:62px;top:14px;width:30px;height:36px;background:#fff;border:1px solid #eee"></i><i style="left:69px;top:17px;width:15px;height:3px;background:#444"></i><i style="left:65px;top:24px;width:24px;height:3px;background:#f3f3f3;border:1px solid #ddd"></i><i style="left:65px;top:28px;width:24px;height:3px;background:#f3f3f3;border:1px solid #ddd"></i><i style="left:65px;top:33px;width:24px;height:2px;background:#3897f0"></i><i style="left:67px;top:41px;width:2px;height:2px;background:#385185"></i><i style="left:70px;top:42px;width:15px;height:1px;background:#8a9bc0"></i><i style="left:72px;top:45px;width:10px;height:1px;background:#d6d6d6"></i><i style="left:62px;top:51px;width:30px;height:1px;background:#ccc"></i><i style="left:82px;top:51px;width:8px;height:1px;background:#5aa9f0"></i><i style="left:68px;top:56px;width:18px;height:1px;background:#d6d6d6"></i><i style="left:62px;top:59px;width:12px;height:4px;background:#111"></i><i style="left:75px;top:59px;width:12px;height:4px;background:#111"></i><i style="left:113px;top:10px;width:2px;height:40px;background:#c9c9c9"></i><i style="left:0;top:62px;width:116px;height:1px;background:#3a566f"></i><i style="left:4px;top:62px;width:29px;height:1px;background:#c9d0d6"></i></div></div><div class="lbl" style="left:625px;top:561px">14-35-29.jpg</div>
  <div class="th" style="left:771px;top:486px"><div class="tc"><i class="bar"></i><i class="bar2"></i><i style="left:1px;top:1px;width:2px;height:2px;background:#e1306c"></i><i style="left:98px;top:3px;width:3px;height:3px;border-radius:50%;background:#ddd"></i><i style="left:26px;top:14px;width:18px;height:49px;border-radius:3px 3px 0 0;background:#2a2a2c"></i><i style="left:34px;top:13px;width:23px;height:50px;border-radius:3px 3px 0 0;background:#fdfdfd;border:1px solid #cfcfcf"></i><i style="left:28px;top:19px;width:6px;height:30px;background:#4f7ea8"></i><i style="left:36px;top:22px;width:19px;height:26px;background:#f1f1f1"></i><i style="left:42px;top:24px;width:11px;height:7px;background:#6b6256"></i><i style="left:40px;top:35px;width:9px;height:11px;background:#9aa0a8"></i><i style="left:43px;top:38px;width:4px;height:4px;border-radius:50%;background:#2b3550"></i><i style="left:62px;top:14px;width:30px;height:36px;background:#fff;border:1px solid #eee"></i><i style="left:69px;top:17px;width:15px;height:3px;background:#444"></i><i style="left:65px;top:24px;width:24px;height:3px;background:#f3f3f3;border:1px solid #ddd"></i><i style="left:65px;top:28px;width:24px;height:3px;background:#f3f3f3;border:1px solid #ddd"></i><i style="left:65px;top:33px;width:24px;height:2px;background:#3897f0"></i><i style="left:67px;top:41px;width:2px;height:2px;background:#385185"></i><i style="left:70px;top:42px;width:15px;height:1px;background:#8a9bc0"></i><i style="left:72px;top:45px;width:10px;height:1px;background:#d6d6d6"></i><i style="left:62px;top:51px;width:30px;height:1px;background:#ccc"></i><i style="left:82px;top:51px;width:8px;height:1px;background:#5aa9f0"></i><i style="left:68px;top:56px;width:18px;height:1px;background:#d6d6d6"></i><i style="left:62px;top:59px;width:12px;height:4px;background:#111"></i><i style="left:75px;top:59px;width:12px;height:4px;background:#111"></i><i style="left:113px;top:10px;width:2px;height:40px;background:#c9c9c9"></i><i style="left:0;top:62px;width:116px;height:1px;background:#3a566f"></i><i style="left:4px;top:62px;width:29px;height:1px;background:#c9d0d6"></i></div></div><div class="lbl" style="left:763px;top:561px">14-35-33.jpg</div>
  <div class="th" style="left:909px;top:486px"><div class="tc"><i class="bar"></i><i class="bar2"></i><i style="left:1px;top:1px;width:2px;height:2px;background:#e1306c"></i><i style="left:98px;top:3px;width:3px;height:3px;border-radius:50%;background:#ddd"></i><i style="left:26px;top:14px;width:18px;height:49px;border-radius:3px 3px 0 0;background:#2a2a2c"></i><i style="left:34px;top:13px;width:23px;height:50px;border-radius:3px 3px 0 0;background:#fdfdfd;border:1px solid #cfcfcf"></i><i style="left:36px;top:22px;width:19px;height:26px;background:#f1f1f1"></i><i style="left:42px;top:24px;width:11px;height:7px;background:#6b6256"></i><i style="left:40px;top:35px;width:9px;height:11px;background:#9aa0a8"></i><i style="left:43px;top:38px;width:4px;height:4px;border-radius:50%;background:#2b3550"></i><i style="left:36px;top:50px;width:10px;height:2px;background:#f0a030"></i><i style="left:62px;top:14px;width:30px;height:36px;background:#fff;border:1px solid #eee"></i><i style="left:69px;top:17px;width:15px;height:3px;background:#444"></i><i style="left:65px;top:24px;width:24px;height:3px;background:#f3f3f3;border:1px solid #ddd"></i><i style="left:65px;top:28px;width:24px;height:3px;background:#f3f3f3;border:1px solid #ddd"></i><i style="left:65px;top:33px;width:24px;height:2px;background:#b2dffc"></i><i style="left:67px;top:41px;width:2px;height:2px;background:#385185"></i><i style="left:70px;top:42px;width:15px;height:1px;background:#8a9bc0"></i><i style="left:72px;top:45px;width:10px;height:1px;background:#d6d6d6"></i><i style="left:62px;top:51px;width:30px;height:1px;background:#ccc"></i><i style="left:82px;top:51px;width:8px;height:1px;background:#5aa9f0"></i><i style="left:68px;top:56px;width:18px;height:1px;background:#d6d6d6"></i><i style="left:62px;top:59px;width:12px;height:4px;background:#111"></i><i style="left:75px;top:59px;width:12px;height:4px;background:#111"></i><i style="left:113px;top:10px;width:2px;height:40px;background:#c9c9c9"></i><i style="left:0;top:62px;width:116px;height:1px;background:#3a566f"></i><i style="left:4px;top:62px;width:29px;height:1px;background:#c9d0d6"></i></div></div><div class="lbl" style="left:901px;top:561px">14-35-40.jpg</div>
  <div class="th" style="left:1047px;top:486px"><div class="tc"><i class="bar"></i><i class="bar2"></i><i style="left:1px;top:1px;width:2px;height:2px;background:#e1306c"></i><i style="left:98px;top:3px;width:3px;height:3px;border-radius:50%;background:#ddd"></i><i style="left:26px;top:14px;width:18px;height:49px;border-radius:3px 3px 0 0;background:#2a2a2c"></i><i style="left:34px;top:13px;width:23px;height:50px;border-radius:3px 3px 0 0;background:#fdfdfd;border:1px solid #cfcfcf"></i><i style="left:28px;top:19px;width:6px;height:6px;background:#2f7fa8"></i><i style="left:28px;top:27px;width:6px;height:6px;background:#8a5a3a"></i><i style="left:28px;top:35px;width:6px;height:6px;background:#b04030"></i><i style="left:28px;top:43px;width:6px;height:6px;background:#446"></i><i style="left:36px;top:22px;width:19px;height:20px;background:#5f9a2a"></i><i style="left:39px;top:25px;width:9px;height:8px;background:#8cc24a"></i><i style="left:43px;top:46px;width:4px;height:4px;border-radius:50%;border:1px solid #bbb"></i><i style="left:62px;top:14px;width:30px;height:36px;background:#fff;border:1px solid #eee"></i><i style="left:69px;top:17px;width:15px;height:3px;background:#444"></i><i style="left:65px;top:24px;width:24px;height:3px;background:#f3f3f3;border:1px solid #ddd"></i><i style="left:65px;top:28px;width:24px;height:3px;background:#f3f3f3;border:1px solid #ddd"></i><i style="left:65px;top:33px;width:24px;height:2px;background:#3897f0"></i><i style="left:67px;top:41px;width:2px;height:2px;background:#385185"></i><i style="left:70px;top:42px;width:15px;height:1px;background:#8a9bc0"></i><i style="left:72px;top:45px;width:10px;height:1px;background:#d6d6d6"></i><i style="left:62px;top:51px;width:30px;height:1px;background:#ccc"></i><i style="left:82px;top:51px;width:8px;height:1px;background:#5aa9f0"></i><i style="left:68px;top:56px;width:18px;height:1px;background:#d6d6d6"></i><i style="left:62px;top:59px;width:12px;height:4px;background:#111"></i><i style="left:75px;top:59px;width:12px;height:4px;background:#111"></i><i style="left:113px;top:10px;width:2px;height:40px;background:#c9c9c9"></i><i style="left:0;top:62px;width:116px;height:1px;background:#3a566f"></i><i style="left:4px;top:62px;width:29px;height:1px;background:#c9d0d6"></i></div></div><div class="lbl" style="left:1039px;top:561px">14-35-45.jpg</div>
  <div class="th" style="left:495px;top:667px"><div class="tc"><i class="bar"></i><i class="bar2"></i><i style="left:1px;top:1px;width:2px;height:2px;background:#e1306c"></i><i style="left:98px;top:3px;width:3px;height:3px;border-radius:50%;background:#ddd"></i><i style="left:26px;top:14px;width:18px;height:49px;border-radius:3px 3px 0 0;background:#2a2a2c"></i><i style="left:34px;top:13px;width:23px;height:50px;border-radius:3px 3px 0 0;background:#fdfdfd;border:1px solid #cfcfcf"></i><i style="left:28px;top:19px;width:6px;height:30px;background:#4f7ea8"></i><i style="left:36px;top:22px;width:19px;height:26px;background:#eee"></i><i style="left:38px;top:24px;width:6px;height:6px;border-radius:50%;background:#3a6ea5"></i><i style="left:37px;top:36px;width:8px;height:10px;background:#5a7fa0"></i><i style="left:46px;top:38px;width:9px;height:10px;background:#d9a23a"></i><i style="left:62px;top:14px;width:30px;height:36px;background:#fff;border:1px solid #eee"></i><i style="left:69px;top:17px;width:15px;height:3px;background:#444"></i><i style="left:65px;top:24px;width:24px;height:3px;background:#f3f3f3;border:1px solid #ddd"></i><i style="left:65px;top:28px;width:24px;height:3px;background:#f3f3f3;border:1px solid #ddd"></i><i style="left:65px;top:33px;width:24px;height:2px;background:#3897f0"></i><i style="left:67px;top:41px;width:2px;height:2px;background:#385185"></i><i style="left:70px;top:42px;width:15px;height:1px;background:#8a9bc0"></i><i style="left:72px;top:45px;width:10px;height:1px;background:#d6d6d6"></i><i style="left:62px;top:51px;width:30px;height:1px;background:#ccc"></i><i style="left:82px;top:51px;width:8px;height:1px;background:#5aa9f0"></i><i style="left:68px;top:56px;width:18px;height:1px;background:#d6d6d6"></i><i style="left:62px;top:59px;width:12px;height:4px;background:#111"></i><i style="left:75px;top:59px;width:12px;height:4px;background:#111"></i><i style="left:113px;top:10px;width:2px;height:40px;background:#c9c9c9"></i><i style="left:0;top:62px;width:116px;height:1px;background:#3a566f"></i><i style="left:4px;top:62px;width:29px;height:1px;background:#c9d0d6"></i></div></div>
  <div class="th" style="left:633px;top:667px"><div class="tc"><i class="bar"></i><i class="bar2"></i><i style="left:1px;top:1px;width:2px;height:2px;background:#e1306c"></i><i style="left:98px;top:3px;width:3px;height:3px;border-radius:50%;background:#ddd"></i><i style="left:26px;top:14px;width:18px;height:49px;border-radius:3px 3px 0 0;background:#2a2a2c"></i><i style="left:34px;top:13px;width:23px;height:50px;border-radius:3px 3px 0 0;background:#fdfdfd;border:1px solid #cfcfcf"></i><i style="left:28px;top:19px;width:6px;height:30px;background:#4f7ea8"></i><i style="left:36px;top:22px;width:19px;height:26px;background:#f1f1f1"></i><i style="left:42px;top:24px;width:11px;height:7px;background:#6b6256"></i><i style="left:40px;top:35px;width:9px;height:11px;background:#9aa0a8"></i><i style="left:43px;top:38px;width:4px;height:4px;border-radius:50%;background:#2b3550"></i><i style="left:62px;top:14px;width:30px;height:36px;background:#fff;border:1px solid #eee"></i><i style="left:69px;top:17px;width:15px;height:3px;background:#444"></i><i style="left:65px;top:24px;width:24px;height:3px;background:#f3f3f3;border:1px solid #ddd"></i><i style="left:65px;top:28px;width:24px;height:3px;background:#f3f3f3;border:1px solid #ddd"></i><i style="left:65px;top:33px;width:24px;height:2px;background:#3897f0"></i><i style="left:67px;top:41px;width:2px;height:2px;background:#385185"></i><i style="left:70px;top:42px;width:15px;height:1px;background:#8a9bc0"></i><i style="left:72px;top:45px;width:10px;height:1px;background:#d6d6d6"></i><i style="left:62px;top:51px;width:30px;height:1px;background:#ccc"></i><i style="left:82px;top:51px;width:8px;height:1px;background:#5aa9f0"></i><i style="left:68px;top:56px;width:18px;height:1px;background:#d6d6d6"></i><i style="left:62px;top:59px;width:12px;height:4px;background:#111"></i><i style="left:75px;top:59px;width:12px;height:4px;background:#111"></i><i style="left:113px;top:10px;width:2px;height:40px;background:#c9c9c9"></i><i style="left:0;top:62px;width:116px;height:1px;background:#3a566f"></i><i style="left:4px;top:62px;width:29px;height:1px;background:#c9d0d6"></i></div></div>
  <div class="th" style="left:771px;top:667px"><div class="tc"><i class="bar"></i><i class="bar2"></i><i style="left:106px;top:11px;width:8px;height:3px;background:#1a73e8"></i><i style="left:94px;top:12px;width:9px;height:1px;background:#cfcfcf"></i><i style="left:48px;top:18px;width:5px;height:5px;border-radius:50%;border:1px solid #4285f4"></i><i style="left:54px;top:19px;width:3px;height:4px;border-radius:50%;background:#ea4335"></i><i style="left:58px;top:19px;width:3px;height:4px;border-radius:50%;background:#fbbc05"></i><i style="left:62px;top:19px;width:3px;height:5px;border-radius:50%;background:#4285f4"></i><i style="left:66px;top:17px;width:1px;height:6px;background:#34a853"></i><i style="left:68px;top:19px;width:3px;height:4px;border-radius:50%;background:#ea4335"></i><i style="left:37px;top:26px;width:44px;height:37px;background:#fff;border:1px solid #e2e2e2;border-radius:2px"></i><i style="left:42px;top:30px;width:4px;height:1px;background:#9a9a9a"></i><i style="left:39px;top:30px;width:1px;height:1px;background:#cfcfcf"></i><i style="left:42px;top:33px;width:8px;height:1px;background:#9a9a9a"></i><i style="left:39px;top:33px;width:1px;height:1px;background:#cfcfcf"></i><i style="left:42px;top:36px;width:9px;height:1px;background:#9a9a9a"></i><i style="left:39px;top:36px;width:1px;height:1px;background:#cfcfcf"></i><i style="left:42px;top:39px;width:8px;height:1px;background:#9a9a9a"></i><i style="left:39px;top:39px;width:1px;height:1px;background:#cfcfcf"></i><i style="left:42px;top:42px;width:12px;height:1px;background:#9a9a9a"></i><i style="left:39px;top:42px;width:1px;height:1px;background:#cfcfcf"></i><i style="left:42px;top:45px;width:9px;height:1px;background:#9a9a9a"></i><i style="left:39px;top:45px;width:1px;height:1px;background:#cfcfcf"></i><i style="left:42px;top:48px;width:8px;height:1px;background:#9a9a9a"></i><i style="left:39px;top:48px;width:1px;height:1px;background:#cfcfcf"></i><i style="left:42px;top:51px;width:10px;height:1px;background:#9a9a9a"></i><i style="left:39px;top:51px;width:1px;height:1px;background:#cfcfcf"></i><i style="left:42px;top:54px;width:9px;height:1px;background:#9a9a9a"></i><i style="left:39px;top:54px;width:1px;height:1px;background:#cfcfcf"></i><i style="left:42px;top:57px;width:8px;height:1px;background:#9a9a9a"></i><i style="left:39px;top:57px;width:1px;height:1px;background:#cfcfcf"></i><i style="left:42px;top:60px;width:9px;height:1px;background:#9a9a9a"></i><i style="left:39px;top:60px;width:1px;height:1px;background:#cfcfcf"></i></div></div>
  <div class="th" style="left:909px;top:667px"><div class="tc"><i class="bar"></i><i class="bar2"></i><i style="left:104px;top:12px;width:9px;height:3px;background:#1a73e8"></i><i style="left:3px;top:12px;width:9px;height:2px;background:#8aa7e8"></i><i style="left:56px;top:13px;width:40px;height:1px;background:#d6d6d6"></i><i style="left:14px;top:21px;width:18px;height:2px;background:#93a9e6"></i><i style="left:14px;top:25px;width:40px;height:1px;background:#cfcfcf"></i><i style="left:92px;top:22px;width:21px;height:11px;background:#fdf0bf"></i><i style="left:94px;top:24px;width:13px;height:1px;background:#caa85a"></i><i style="left:94px;top:27px;width:9px;height:1px;background:#9fb0d6"></i><i style="left:94px;top:30px;width:11px;height:1px;background:#d1a33a"></i><i style="left:66px;top:27px;width:15px;height:2px;background:#555"></i><i style="left:66px;top:31px;width:8px;height:1px;background:#cfcfcf"></i><i style="left:94px;top:37px;width:14px;height:3px;border-radius:2px;background:#1da1f2"></i><i style="left:14px;top:30px;width:20px;height:1px;background:#93a9e6"></i><i style="left:42px;top:30px;width:24px;height:1px;background:#93a9e6"></i><i style="left:14px;top:32px;width:22px;height:1px;background:#cfcfcf"></i><i style="left:42px;top:32px;width:20px;height:1px;background:#cfcfcf"></i><i style="left:14px;top:36px;width:20px;height:1px;background:#93a9e6"></i><i style="left:42px;top:36px;width:22px;height:1px;background:#93a9e6"></i><i style="left:14px;top:38px;width:18px;height:1px;background:#cfcfcf"></i><i style="left:42px;top:38px;width:24px;height:1px;background:#cfcfcf"></i><i style="left:66px;top:38px;width:44px;height:1px;background:#c4c4c4"></i><i style="left:66px;top:40px;width:40px;height:1px;background:#cfcfcf"></i><i style="left:66px;top:42px;width:42px;height:1px;background:#c4c4c4"></i></div></div>
  <div class="th" style="left:1047px;top:667px"><div class="tc"><i class="bar"></i><i class="bar2"></i><i style="left:57px;top:38px;width:1px;height:1px;background:#8ab4f8"></i></div></div>
  <!-- scrollbar -->
  <div class="abs" style="left:1248px;top:90px;width:15px;height:620px;background:#f0f0f0"></div>
  <div class="abs" style="left:1248px;top:114px;width:15px;height:144px;background:#cdcdcd"></div>
  <svg class="abs" style="left:1251px;top:95px" width="8" height="7.6" viewBox="0 0 8 7.6"><path d="M1 6.2 L4 2.5 L7 6.2" stroke="#4d4d4d" stroke-width="2.1" fill="none"/></svg>
  <svg class="abs" style="left:1251px;top:699.4px" width="8" height="7.6" viewBox="0 0 8 7.6"><path d="M1 1.4 L4 5.1 L7 1.4" stroke="#4d4d4d" stroke-width="2.1" fill="none"/></svg>
</div>

<!-- ================= DIALOG ================= -->
<div id="dlg" class="abs">

  <div id="dtitle" class="abs"></div>
  <div class="dl" style="left:8px;top:8px;color:#fff;letter-spacing:-0.18px">Revealer Keylogger options</div>
  <svg class="abs" style="left:604px;top:9px" width="11" height="11" viewBox="0 0 11 11"><path d="M.5 .5 L10.5 10.5 M10.5 .5 L.5 10.5" stroke="#fff" stroke-width="1.2"/></svg>
  <div id="nav" class="abs"><div class="ni" style="top:1px">General</div><div class="ni" style="top:29px">Keystrokes</div><div class="ni" style="top:57px">Screenshots</div><div class="ni" style="top:85px">Delivery</div><div class="ni on" style="top:113px">Filters</div><div class="ni" style="top:141px">Security</div><div class="ni" style="top:169px">Uninstall</div></div>

  <!-- checkbox -->
  <div class="abs" style="left:174px;top:54px;width:13px;height:13px;background:#fff;border:1px solid #333"></div>
  <svg class="abs" style="left:174px;top:54px" width="13" height="13" viewBox="0 0 13 13"><path d="M2.6 6.6 L5.2 9.2 L10.4 3.4" stroke="#222" stroke-width="1.2" fill="none"/></svg>
  <div class="dl" style="left:190px;top:54px;letter-spacing:-0.05px">Enable filtering</div>

  <div class="dl" style="left:174px;top:99px;letter-spacing:-0.13px">Program names (separated by commas: chrome.exe,skype.exe)</div>
  <div class="radio on" style="left:174px;top:119px"></div>
  <div class="dl" style="left:190px;top:119px">Include</div>
  <div class="radio" style="left:243px;top:119px"></div>
  <div class="dl" style="left:259px;top:119px;letter-spacing:-0.3px">Exclude</div>
  <div class="ta" style="top:138px;border:1px solid #0078d7"></div>
  <div class="dl" style="left:180px;top:142px;letter-spacing:-0.05px">chrome.exe</div>
  <div class="abs" style="left:243px;top:142px;width:1px;height:14px;background:#000"></div>

  <div class="dl" style="left:174px;top:259px;letter-spacing:-0.13px">Keywords in title (separated by commas: youtube,facebook)</div>
  <div class="radio on" style="left:174px;top:279px"></div>
  <div class="dl" style="left:190px;top:279px">Include</div>
  <div class="radio" style="left:243px;top:279px"></div>
  <div class="dl" style="left:259px;top:279px;letter-spacing:-0.3px">Exclude</div>
  <div class="ta" style="top:298px;border:1px solid #7a7a7a"></div>

  <div class="abs" style="left:166px;top:444px;width:449px;height:1px;background:#a0a0a0"></div>
  <!-- OK button -->
  <div class="abs" style="left:541px;top:455px;width:74px;height:23px;background:#e1e1e1;border:2px solid #0078d7"></div>
  <svg class="abs" style="left:561px;top:457px" width="15.5" height="16.5" viewBox="0 0 15 16">
    <path d="M7.5 .6 C5.6 2 3.2 2.6 .8 2.6 C.6 8.4 2.6 12.8 7.5 15.4 C12.4 12.8 14.4 8.4 14.2 2.6 C11.8 2.6 9.4 2 7.5 .6 Z" fill="#4a4a4a"/>
    <path d="M7.5 1.9 C5.8 3 3.8 3.6 1.8 3.65 C1.8 5.2 1.95 6.6 2.3 7.9 H7.5 Z" fill="#1f66d1"/>
    <path d="M7.5 1.9 C9.2 3 11.2 3.6 13.2 3.65 C13.2 5.2 13.05 6.6 12.7 7.9 H7.5 Z" fill="#f6c02c"/>
    <path d="M2.3 7.9 C3 10.6 4.7 12.7 7.5 14.2 V7.9 Z" fill="#f6c02c"/>
    <path d="M12.7 7.9 C12 10.6 10.3 12.7 7.5 14.2 V7.9 Z" fill="#1f66d1"/>
  </svg>
  <div class="dl" style="left:578px;top:460px;letter-spacing:-1.5px">OK</div>
</div>
</body>
</html>
